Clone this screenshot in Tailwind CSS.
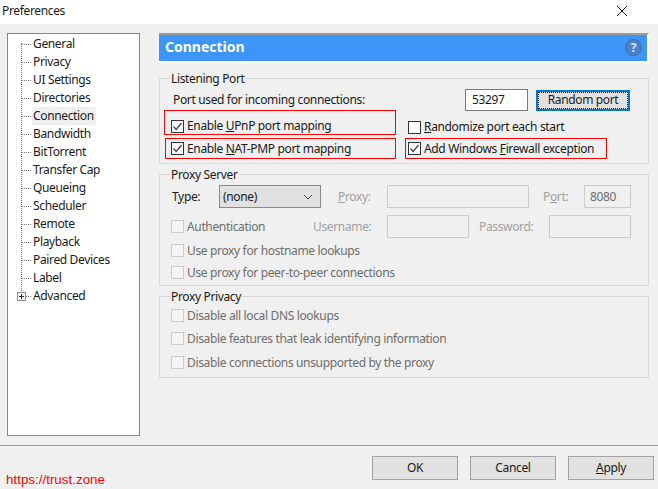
<!DOCTYPE html>
<html lang="en">
<head>
  <meta charset="UTF-8" />
  <title>Preferences</title>
  <script src="https://cdn.jsdelivr.net/npm/@tailwindcss/browser@4"></script>
</head>
<body class="w-[658px] h-[489px] overflow-hidden bg-[#f0f0f0] text-[12px] leading-[16px] tracking-[-0.35px] text-[#1a1a1a] font-['Noto_Sans',sans-serif] flex flex-col">
  <!-- TITLE BAR -->
  <header class="h-[24px] shrink-0 bg-white flex items-center justify-between pl-[2px] pr-[31px]">
    <span class="-mt-[2px]">Preferences</span>
    <svg width="10" height="10" viewBox="0 0 10 10" class="-mt-[3px]" stroke="#222" fill="none"><path d="M0 0 L10 10 M10 0 L0 10" /></svg>
  </header>

  <!-- MAIN -->
  <div class="h-[397px] shrink-0 flex pt-[9px] pl-[7px]">
    <!-- TREE -->
    <nav class="relative w-[133px] h-[403px] shrink-0 bg-white border border-[#828790] pt-[1px]">
      <div class="absolute left-[13px] top-[9px] h-[252px] border-l border-dotted border-[#777]"></div>
      <div class="flex items-center h-[18px]"><span class="ml-[14px] w-[9px] border-t border-dotted border-[#777]"></span><span class="ml-[1px] px-[1px]">General</span></div>
      <div class="flex items-center h-[18px]"><span class="ml-[14px] w-[9px] border-t border-dotted border-[#777]"></span><span class="ml-[1px] px-[1px]">Privacy</span></div>
      <div class="flex items-center h-[18px]"><span class="ml-[14px] w-[9px] border-t border-dotted border-[#777]"></span><span class="ml-[1px] px-[1px]">UI Settings</span></div>
      <div class="flex items-center h-[18px]"><span class="ml-[14px] w-[9px] border-t border-dotted border-[#777]"></span><span class="ml-[1px] px-[1px]">Directories</span></div>
      <div class="flex items-center h-[18px]"><span class="ml-[14px] w-[9px] border-t border-dotted border-[#777]"></span><span class="ml-[1px] pl-[1px] pr-[2px] h-[18px] flex items-center bg-[#f0f0f0]">Connection</span></div>
      <div class="flex items-center h-[18px]"><span class="ml-[14px] w-[9px] border-t border-dotted border-[#777]"></span><span class="ml-[1px] px-[1px]">Bandwidth</span></div>
      <div class="flex items-center h-[18px]"><span class="ml-[14px] w-[9px] border-t border-dotted border-[#777]"></span><span class="ml-[1px] px-[1px]">BitTorrent</span></div>
      <div class="flex items-center h-[18px]"><span class="ml-[14px] w-[9px] border-t border-dotted border-[#777]"></span><span class="ml-[1px] px-[1px]">Transfer Cap</span></div>
      <div class="flex items-center h-[18px]"><span class="ml-[14px] w-[9px] border-t border-dotted border-[#777]"></span><span class="ml-[1px] px-[1px]">Queueing</span></div>
      <div class="flex items-center h-[18px]"><span class="ml-[14px] w-[9px] border-t border-dotted border-[#777]"></span><span class="ml-[1px] px-[1px]">Scheduler</span></div>
      <div class="flex items-center h-[18px]"><span class="ml-[14px] w-[9px] border-t border-dotted border-[#777]"></span><span class="ml-[1px] px-[1px]">Remote</span></div>
      <div class="flex items-center h-[18px]"><span class="ml-[14px] w-[9px] border-t border-dotted border-[#777]"></span><span class="ml-[1px] px-[1px]">Playback</span></div>
      <div class="flex items-center h-[18px]"><span class="ml-[14px] w-[9px] border-t border-dotted border-[#777]"></span><span class="ml-[1px] px-[1px]">Paired Devices</span></div>
      <div class="flex items-center h-[18px]"><span class="ml-[14px] w-[9px] border-t border-dotted border-[#777]"></span><span class="ml-[1px] px-[1px]">Label</span></div>
      <div class="relative flex items-center h-[18px]">
        <span class="ml-[14px] w-[9px] border-t border-dotted border-[#777]"></span><span class="ml-[1px] px-[1px]">Advanced</span>
        <svg width="9" height="9" viewBox="0 0 9 9" class="absolute left-[9px] top-[5px]"><rect x=".5" y=".5" width="8" height="8" fill="#f4f4f4" stroke="#919191" /><path d="M2 4.5H7M4.5 2V7" stroke="#1c2a5a" /></svg>
      </div>
    </nav>

    <!-- PANEL -->
    <main class="ml-[19px] w-[490px] shrink-0 flex flex-col">
      <div class="h-[30px] bg-[#3c96f8] border-t-2 border-t-[#9a9a9a] border-b-2 border-b-white border-r-2 border-r-white flex items-center justify-between pl-[6px] pr-[5px]">
        <span class="text-[14px] font-bold tracking-normal text-white -mt-[3px]">Connection</span>
        <span class="w-[17px] h-[17px] -mt-[2px] rounded-full bg-[#4b82c8] border border-[#3a6cab] text-[#dce8f7] text-[12px] leading-[15px] tracking-normal font-bold text-center">?</span>
      </div>

      <!-- Listening Port -->
      <section class="mt-[15px] h-[86px] border border-[#d9d9d9] pl-[4px]">
        <h3 class="-mt-[8px] ml-[6px] w-fit px-[1px] h-[16px] bg-[#f0f0f0] text-[#1a1a1a]">Listening Port</h3>
        <div class="flex items-center h-[22px] mt-[2px]">
          <span class="ml-[9px] w-[292px]">Port used for incoming connections:</span>
          <span class="w-[63px] h-[22px] bg-white border border-[#7a7a7a] flex items-center pl-[6px]">53297</span>
          <button class="ml-[8px] w-[94px] h-[21px] bg-[#e1e1e1] border-2 border-[#0078d7] outline outline-1 outline-dotted -outline-offset-3 outline-[#222]">Random port</button>
        </div>
        <div class="flex h-[25px] -mt-[1px]">
          <div class="w-[232px] border border-[#ff0000] flex items-end pl-[6px] pb-[1px] gap-[3px]">
            <span class="w-[13px] h-[13px] bg-white border border-[#333] flex items-center justify-center"><svg width="11" height="11" viewBox="0 0 11 11" fill="none" stroke="#444" stroke-width="1.3"><path d="M1.5 5.5 L4.2 8.4 L9.5 2" /></svg></span>
            <span class="translate-y-[1px]">Enable <span class="underline">U</span>PnP port mapping</span>
          </div>
          <div class="ml-[12px] flex items-end pb-[1px] gap-[3px]">
            <span class="w-[13px] h-[13px] bg-white border border-[#333]"></span>
            <span class="translate-y-[1px]"><span class="underline">R</span>andomize port each start</span>
          </div>
        </div>
        <div class="flex h-[21px] mt-[3px]">
          <div class="ml-[1px] w-[231px] border border-[#ff0000] flex items-center pl-[5px] gap-[3px]">
            <span class="w-[13px] h-[13px] bg-white border border-[#333] flex items-center justify-center"><svg width="11" height="11" viewBox="0 0 11 11" fill="none" stroke="#444" stroke-width="1.3"><path d="M1.5 5.5 L4.2 8.4 L9.5 2" /></svg></span>
            <span>Enable <span class="underline">N</span>AT-PMP port mapping</span>
          </div>
          <div class="ml-[9px] w-[202px] border border-[#ff0000] flex items-center pl-[2px] gap-[3px]">
            <span class="w-[13px] h-[13px] bg-white border border-[#333] flex items-center justify-center"><svg width="11" height="11" viewBox="0 0 11 11" fill="none" stroke="#444" stroke-width="1.3"><path d="M1.5 5.5 L4.2 8.4 L9.5 2" /></svg></span>
            <span>Add Windows <span class="underline">F</span>irewall exception</span>
          </div>
        </div>
      </section>

      <!-- Proxy Server -->
      <section class="mt-[10px] h-[112px] border border-[#d9d9d9] pl-[11px]">
        <h3 class="-mt-[8px] w-fit px-[1px] -ml-[1px] h-[16px] bg-[#f0f0f0]">Proxy Server</h3>
        <div class="flex items-center h-[23px] mt-[2px]">
          <span class="ml-[1px] w-[47px]">T<span class="underline">y</span>pe:</span>
          <span class="w-[102px] h-[23px] bg-[#e1e1e1] border border-[#8a8a8a] flex items-center justify-between pl-[3px] pr-[7px]">(none)<svg width="10" height="6" viewBox="0 0 10 6" fill="none" stroke="#444"><path d="M1 1 L5 5 L9 1" /></svg></span>
          <span class="ml-[17px] w-[49px] text-[#a0a0a0]"><span class="underline">P</span>roxy:</span>
          <span class="w-[142px] h-[23px] border border-[#cccccc]"></span>
          <span class="ml-[14px] w-[41px] text-[#a0a0a0]">P<span class="underline">o</span>rt:</span>
          <span class="w-[47px] h-[23px] border border-[#cccccc] flex items-center pl-[5px] text-[#6d6d6d]">8080</span>
        </div>
        <div class="flex items-center h-[23px] mt-[7px] text-[#6d6d6d]">
          <span class="w-[13px] h-[13px] bg-[#f4f4f4] border border-[#cccccc]"></span>
          <span class="ml-[3px] w-[126px]">Authentication</span>
          <span class="w-[74px] text-[#a0a0a0]">Username:</span>
          <span class="w-[82px] h-[23px] border border-[#cccccc]"></span>
          <span class="ml-[10px] w-[70px] text-[#a0a0a0]">Password:</span>
          <span class="w-[82px] h-[23px] border border-[#cccccc]"></span>
        </div>
        <div class="flex items-center gap-[3px] h-[13px] mt-[6px] text-[#6d6d6d]">
          <span class="w-[13px] h-[13px] bg-[#f4f4f4] border border-[#cccccc]"></span>
          <span>Use proxy for hostname lookups</span>
        </div>
        <div class="flex items-center gap-[3px] h-[13px] mt-[9px] text-[#6d6d6d]">
          <span class="w-[13px] h-[13px] bg-[#f4f4f4] border border-[#cccccc]"></span>
          <span>Use proxy for peer-to-peer connections</span>
        </div>
      </section>

      <!-- Proxy Privacy -->
      <section class="mt-[10px] h-[82px] border border-[#d9d9d9] pl-[11px] text-[#6d6d6d]">
        <h3 class="-mt-[8px] w-fit px-[1px] -ml-[1px] h-[16px] bg-[#f0f0f0] text-[#1a1a1a]">Proxy Privacy</h3>
        <div class="flex items-center gap-[3px] h-[13px] mt-[4px]">
          <span class="w-[13px] h-[13px] bg-[#f4f4f4] border border-[#cccccc]"></span>
          <span>Disable all local DNS lookups</span>
        </div>
        <div class="flex items-center gap-[3px] h-[13px] mt-[10px]">
          <span class="w-[13px] h-[13px] bg-[#f4f4f4] border border-[#cccccc]"></span>
          <span>Disable features that leak identifying information</span>
        </div>
        <div class="flex items-center gap-[3px] h-[13px] mt-[11px]">
          <span class="w-[13px] h-[13px] bg-[#f4f4f4] border border-[#cccccc]"></span>
          <span>Disable connections unsupported by the proxy</span>
        </div>
      </section>
    </main>
  </div>

  <!-- FOOTER -->
  <footer class="mt-[24px] flex-1 border-t border-[#a0a0a0] flex items-start justify-between pl-[6px] pr-[4px] pt-[10px]">
    <span class="mt-[16px] text-[13.4px] leading-[16px] tracking-normal text-[#ff0000] font-['Liberation_Sans',sans-serif]">https://trust.zone</span>
    <div class="flex gap-[12px]">
      <button class="w-[86px] h-[24px] bg-[#e1e1e1] border border-[#a3a3a3]">OK</button>
      <button class="w-[86px] h-[24px] bg-[#e1e1e1] border border-[#a3a3a3]">Cancel</button>
      <button class="w-[86px] h-[24px] bg-[#e1e1e1] border border-[#a3a3a3]"><span class="underline">A</span>pply</button>
    </div>
  </footer>
</body>
</html>
